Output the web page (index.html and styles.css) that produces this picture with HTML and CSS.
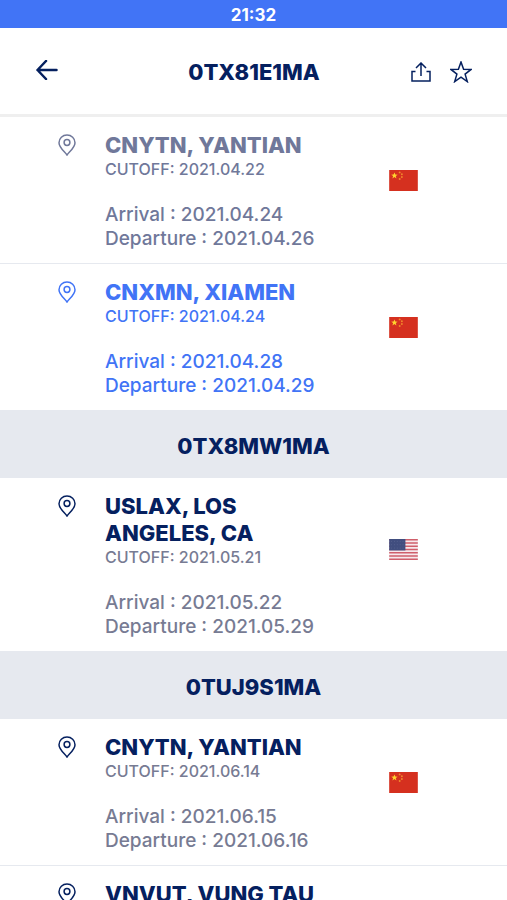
FILE: index.html
```html
<!DOCTYPE html>
<html lang="en">
<head>
  <meta charset="UTF-8">
  <meta name="viewport" content="width=device-width, initial-scale=1.0">
  <link rel="stylesheet" href="styles.css">
  <title>0TX81E1MA</title>
</head>
<body>

  <!-- Shared icons -->
  <svg class="sprite" aria-hidden="true">
    <symbol id="pin" viewBox="0 0 18 22">
      <path d="M9 21C6.500 17.500 1 13.500 1 8.700a8 7.700 0 0 1 16 0C17 13.500 11.500 17.500 9 21z"/>
      <circle cx="9" cy="8.500" r="2.900"/>
    </symbol>
    <symbol id="china" viewBox="0 0 30 22">
      <rect width="30" height="22" fill="#d5301f"/>
      <path fill="#ffd52e" d="M5.500 2.500l.9 2.300 2.500.1-2 1.500.7 2.400-2.100-1.400-2.100 1.400.7-2.400-2-1.500 2.500-.1z"/>
      <g fill="#f08a2c">
        <circle cx="11" cy="2.500" r="1"/>
        <circle cx="13.300" cy="4.500" r="1"/>
        <circle cx="13.300" cy="7.300" r="1"/>
        <circle cx="11" cy="9.500" r="1"/>
      </g>
    </symbol>
    <symbol id="usa" viewBox="0 0 30 22">
      <rect width="30" height="22" fill="#f6e9ec"/>
      <path stroke="#cf5f6b" stroke-width="1.700" d="M0 .8h30M0 4.200h30M0 7.600h30M0 11h30M0 14.400h30M0 17.800h30M0 21.200h30"/>
      <rect width="17" height="12" fill="#414e7f"/>
      <path stroke="#56628f" stroke-width="1" stroke-dasharray="1 2" d="M2 2.500h14M2 6h14M2 9.500h14"/>
    </symbol>
  </svg>

  <div class="status">21:32</div>

  <header>
    <button class="back" aria-label="Back">
      <svg width="22" height="20" viewBox="0 0 22 20"><path d="M10 1L1.500 10l8.500 9M1.500 10h19"/></svg>
    </button>
    <h1>0TX81E1MA</h1>
    <div class="actions">
      <button aria-label="Share">
        <svg width="20" height="20" viewBox="0 0 20 20"><path d="M4.500 9.500H1v9.500h18V9.500h-3.500M10 14V1M5 6l5-5 5 5"/></svg>
      </button>
      <button aria-label="Favorite">
        <svg width="22" height="22" viewBox="0 0 22 22"><path d="M11 1l2.600 7.200 7.500.2-6 4.700 2.200 7.500L11 16.200l-6.300 4.400 2.200-7.500-6-4.700 7.500-.2z"/></svg>
      </button>
    </div>
  </header>

  <main>
    <article class="port past">
      <svg class="pin"><use href="#pin"/></svg>
      <div class="info">
        <h3>CNYTN, YANTIAN</h3>
        <p class="cutoff">CUTOFF: 2021.04.22</p>
        <p>Arrival : 2021.04.24</p>
        <p>Departure : 2021.04.26</p>
      </div>
      <svg class="flag" role="img" aria-label="China"><use href="#china"/></svg>
    </article>

    <article class="port current last">
      <svg class="pin"><use href="#pin"/></svg>
      <div class="info">
        <h3>CNXMN, XIAMEN</h3>
        <p class="cutoff">CUTOFF: 2021.04.24</p>
        <p>Arrival : 2021.04.28</p>
        <p>Departure : 2021.04.29</p>
      </div>
      <svg class="flag" role="img" aria-label="China"><use href="#china"/></svg>
    </article>

    <h2>0TX8MW1MA</h2>

    <article class="port long last">
      <svg class="pin"><use href="#pin"/></svg>
      <div class="info">
        <h3>USLAX, LOS ANGELES, CA</h3>
        <p class="cutoff">CUTOFF: 2021.05.21</p>
        <p>Arrival : 2021.05.22</p>
        <p>Departure : 2021.05.29</p>
      </div>
      <svg class="flag" role="img" aria-label="United States"><use href="#usa"/></svg>
    </article>

    <h2>0TUJ9S1MA</h2>

    <article class="port">
      <svg class="pin"><use href="#pin"/></svg>
      <div class="info">
        <h3>CNYTN, YANTIAN</h3>
        <p class="cutoff">CUTOFF: 2021.06.14</p>
        <p>Arrival : 2021.06.15</p>
        <p>Departure : 2021.06.16</p>
      </div>
      <svg class="flag" role="img" aria-label="China"><use href="#china"/></svg>
    </article>

    <article class="port last">
      <svg class="pin"><use href="#pin"/></svg>
      <div class="info">
        <h3>VNVUT, VUNG TAU</h3>
      </div>
    </article>
  </main>

</body>
</html>
```
FILE: styles.css
```css
* {
  box-sizing: border-box;
}

body {
  display: flex;
  flex-direction: column;
  height: 100vh;
  margin: 0;
  overflow: hidden;
  font-family: Inter, sans-serif;
  background-color: #fff;
  color: #05205f;
}

h1, h2, h3, p {
  margin: 0;
}

svg {
  display: block;
  flex-shrink: 0;
}

.sprite {
  position: absolute;
  width: 0;
  height: 0;
}

.status {
  background-color: #4174f6;
  color: #fff;
  font-size: 17px;
  font-weight: 700;
  line-height: 28px;
  padding-top: 1px;
  height: 28px;
  text-align: center;
  flex-shrink: 0;
}

header {
  display: grid;
  grid-template-columns: 1fr auto 1fr;
  align-items: center;
  padding: 29px 35px 27px 36px;
  border-bottom: 3px solid #efefef;
  flex-shrink: 0;
}

h1, h2, h3 {
  font-size: 22px;
  font-weight: 800;
}

h1 {
  line-height: 30px;
}

header button {
  padding: 0;
  border: none;
  background: none;
  color: inherit;
  cursor: pointer;
}

header svg {
  fill: none;
  stroke: currentColor;
  stroke-width: 1.5;
}

.back {
  justify-self: start;
  padding-bottom: 4px;
}

.back svg {
  stroke-width: 2.5;
  stroke-linecap: round;
  stroke-linejoin: round;
}

.actions {
  display: flex;
  align-items: center;
  gap: 19px;
  justify-self: end;
}

main {
  flex: 1;
  overflow-y: auto;
  scrollbar-width: none;
}

h2 {
  background-color: #e6e9ef;
  line-height: 28px;
  padding: 22px 0 18px;
  text-align: center;
}

.port {
  display: flex;
  align-items: flex-start;
  padding: 15px 89px 12px 58px;
  border-bottom: 1px solid #e6e9ef;
}

.port.last {
  border-bottom: none;
}

.port .pin {
  width: 18px;
  height: 22px;
  margin-top: 2px;
  fill: none;
  stroke: currentColor;
  stroke-width: 1.5;
}

.info {
  flex: 1;
  padding: 0 50px 0 29px;
}

h3 {
  line-height: 27px;
}

.info p {
  color: #777b93;
  font-size: 19px;
  font-weight: 500;
  line-height: 24px;
}

.info .cutoff {
  font-size: 16px;
  line-height: 21px;
  margin-bottom: 23px;
}

.flag {
  width: 29px;
  height: 21px;
  margin-top: 38px;
}

.long .flag {
  margin-top: 46px;
}

.past,
.past p {
  color: #70789a;
}

.current,
.current p {
  color: #4174f6;
}
```
